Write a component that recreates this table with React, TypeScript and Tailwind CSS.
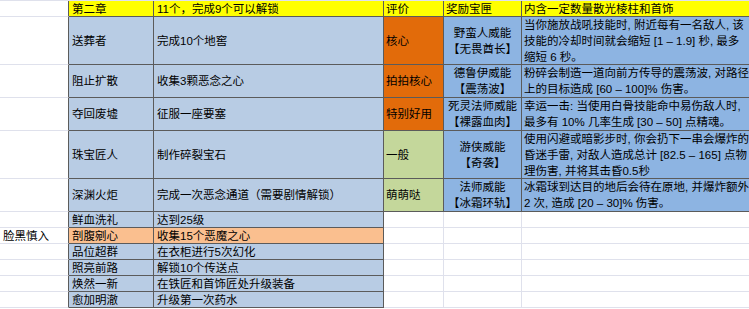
import React from 'react';

const DARK = 'border-[#5b5b5b]';
const LIGHT = 'border-[#dfe1ec]';

interface QuestRow {
  name: string;
  task: string;
  rating: string;
  ratingBg: string;
  reward: string[];
  desc: string[];
  height: string;
}

const mainRows: QuestRow[] = [
  {
    name: '送葬者',
    task: '完成10个地窖',
    rating: '核心',
    ratingBg: 'bg-[#e26b0a]',
    reward: ['野蛮人威能', '【无畏酋长】'],
    desc: ['当你施放战吼技能时, 附近每有一名敌人, 该', '技能的冷却时间就会缩短 [1 – 1.9] 秒, 最多', '缩短 6 秒。'],
    height: 'h-[48px]',
  },
  {
    name: '阻止扩散',
    task: '收集3颗恶念之心',
    rating: '拍拍核心',
    ratingBg: 'bg-[#e26b0a]',
    reward: ['德鲁伊威能', '【震荡波】'],
    desc: ['粉碎会制造一道向前方传导的震荡波, 对路径', '上的目标造成 [60 – 100]% 伤害。'],
    height: 'h-[33px]',
  },
  {
    name: '夺回废墟',
    task: '征服一座要塞',
    rating: '特别好用',
    ratingBg: 'bg-[#e26b0a]',
    reward: ['死灵法师威能', '【裸露血肉】'],
    desc: ['幸运一击: 当使用白骨技能命中易伤敌人时,', '最多有 10% 几率生成 [30 – 50] 点精魂。'],
    height: 'h-[33px]',
  },
  {
    name: '珠宝匠人',
    task: '制作碎裂宝石',
    rating: '一般',
    ratingBg: 'bg-[#c4d79b]',
    reward: ['游侠威能', '【奇袭】'],
    desc: ['使用闪避或暗影步时, 你会扔下一串会爆炸的', '昏迷手雷, 对敌人造成总计 [82.5 – 165] 点物', '理伤害, 并将其击昏0.5秒'],
    height: 'h-[48px]',
  },
  {
    name: '深渊火炬',
    task: '完成一次恶念通道（需要剧情解锁）',
    rating: '萌萌哒',
    ratingBg: 'bg-[#c4d79b]',
    reward: ['法师威能', '【冰霜环轨】'],
    desc: ['冰霜球到达目的地后会待在原地, 并爆炸额外', '2 次, 造成 [20 – 30]% 伤害。'],
    height: 'h-[33px]',
  },
];

const extraRows = [
  { side: '', name: '鲜血洗礼', task: '达到25级', hot: false },
  { side: '脸黑慎入', name: '剖腹剜心', task: '收集15个恶魔之心', hot: true },
  { side: '', name: '品位超群', task: '在衣柜进行5次幻化', hot: false },
  { side: '', name: '照亮前路', task: '解锁10个传送点', hot: false },
  { side: '', name: '焕然一新', task: '在铁匠和首饰匠处升级装备', hot: false },
  { side: '', name: '愈加明澈', task: '升级第一次药水', hot: false },
];

const cell = 'border-b border-r overflow-hidden whitespace-nowrap';

export default function App() {
  return (
    <div
      className="w-[749px] h-[309px] overflow-hidden bg-white text-[11.5px] leading-[16px] text-black"
      style={{ fontFamily: '"Liberation Sans", "Noto Sans CJK SC", sans-serif' }}
    >
      <div className={`h-[1px] border-b ${LIGHT}`} />

      {/* header */}
      <div className="flex h-[16px]">
        <div className={`${cell} w-[69px] ${LIGHT} border-r-[#5b5b5b]`} />
        <div className={`${cell} ${DARK} w-[85px] bg-[#ffff00] px-[3px] flex items-center`}>第二章</div>
        <div className={`${cell} ${DARK} w-[230px] bg-[#ffff00] px-[3px] flex items-center`}>11个，完成9个可以解锁</div>
        <div className={`${cell} ${DARK} w-[60px] bg-[#ffff00] px-[2px] flex items-center`}>评价</div>
        <div className={`${cell} ${DARK} w-[78px] bg-[#ffff00] px-[2px] flex items-center`}>奖励宝匣</div>
        <div className={`${cell} ${DARK} w-[227px] bg-[#ffff00] px-[2px] flex items-center border-r-0`}>内含一定数量散光棱柱和首饰</div>
      </div>

      {mainRows.map((row) => (
        <div key={row.name} className={`flex ${row.height}`}>
          <div className={`${cell} w-[69px] ${LIGHT} border-r-[#5b5b5b]`} />
          <div className={`${cell} ${DARK} w-[85px] bg-[#b8cce4] px-[3px] flex items-center`}>{row.name}</div>
          <div className={`${cell} ${DARK} w-[230px] bg-[#b8cce4] px-[3px] flex items-center`}>{row.task}</div>
          <div className={`${cell} ${DARK} w-[60px] ${row.ratingBg} px-[2px] flex items-center`}>{row.rating}</div>
          <div className={`${cell} ${DARK} w-[78px] bg-[#8db4e2] flex flex-col items-center justify-center`}>
            {row.reward.map((line) => (
              <span key={line}>{line}</span>
            ))}
          </div>
          <div className={`${cell} ${DARK} w-[227px] bg-[#8db4e2] px-[2px] flex flex-col border-r-0`}>
            {row.desc.map((line) => (
              <span key={line}>{line}</span>
            ))}
          </div>
        </div>
      ))}

      {extraRows.map((row) => (
        <div key={row.name} className="flex h-[16px]">
          <div className={`${cell} w-[69px] ${LIGHT} border-r-[#5b5b5b] px-[3px] flex items-center`}>{row.side}</div>
          <div className={`${cell} ${DARK} w-[85px] ${row.hot ? 'bg-[#fabf8f]' : 'bg-[#b8cce4]'} px-[3px] flex items-center`}>{row.name}</div>
          <div className={`${cell} ${DARK} w-[230px] ${row.hot ? 'bg-[#fabf8f]' : 'bg-[#b8cce4]'} px-[3px] flex items-center`}>{row.task}</div>
          <div className={`${cell} ${LIGHT} w-[60px]`} />
          <div className={`${cell} ${LIGHT} w-[78px]`} />
          <div className={`${cell} ${LIGHT} w-[227px] border-r-0`} />
        </div>
      ))}
    </div>
  );
}
